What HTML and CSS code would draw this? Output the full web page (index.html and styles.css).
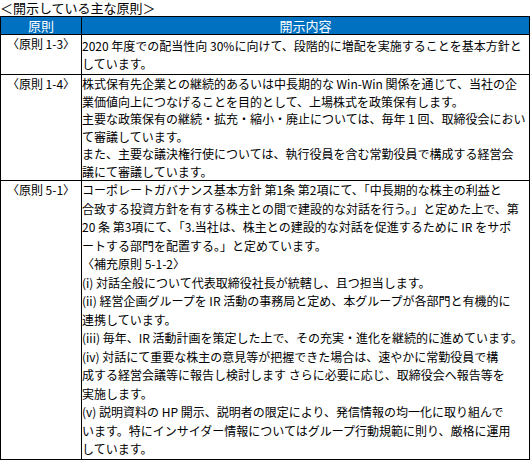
FILE: index.html
```html
<!DOCTYPE html>
<html lang="ja">
<head>
<meta charset="utf-8">
<link rel="stylesheet" href="styles.css">
</head>
<body>
<div class="page">
  <p class="title">＜開示している主な原則＞</p>
  <table class="grid">
    <thead>
      <tr class="head">
        <th class="col-l">原則</th>
        <th class="col-r">開示内容</th>
      </tr>
    </thead>
    <tbody>
      <tr class="row r1">
        <td class="label">〈原則 1-3〉</td>
        <td class="body">2020 年度での配当性向 30%に向けて、段階的に増配を実施することを基本方針と<br>しています。</td>
      </tr>
      <tr class="row r2">
        <td class="label">〈原則 1-4〉</td>
        <td class="body">株式保有先企業との継続的あるいは中長期的な Win-Win 関係を通じて、当社の企<br>業価値向上につなげることを目的として、上場株式を政策保有します。<br>主要な政策保有の継続・拡充・縮小・廃止については、毎年 1 回、取締役会におい<br>て審議しています。<br>また、主要な議決権行使については、執行役員を含む常勤役員で構成する経営会<br>議にて審議しています。</td>
      </tr>
      <tr class="row r3">
        <td class="label">〈原則 5-1〉</td>
        <td class="body">コーポレートガバナンス基本方針 第1条 第2項にて、「中長期的な株主の利益と<br>合致する投資方針を有する株主との間で建設的な対話を行う。」と定めた上で、第<br>20 条 第3項にて、「3.当社は、株主との建設的な対話を促進するために IR をサポ<br>ートする部門を配置する。」と定めています。<br>〈補充原則 5-1-2〉<br>(i) 対話全般について代表取締役社長が統轄し、且つ担当します。<br>(ii) 経営企画グループを IR 活動の事務局と定め、本グループが各部門と有機的に<br>連携しています。<br>(iii) 毎年、IR 活動計画を策定した上で、その充実・進化を継続的に進めています。<br>(iv) 対話にて重要な株主の意見等が把握できた場合は、速やかに常勤役員で構<br>成する経営会議等に報告し検討します さらに必要に応じ、取締役会へ報告等を<br>実施します。<br>(v) 説明資料の HP 開示、説明者の限定により、発信情報の均一化に取り組んで<br>います。特にインサイダー情報についてはグループ行動規範に則り、厳格に運用<br>しています。</td>
      </tr>
    </tbody>
  </table>
</div>
</body>
</html>
```

FILE: styles.css
```css
html, body {
  margin: 0;
  padding: 0;
  background: #ffffff;
}

body {
  font-family: "Noto Sans CJK JP", "Noto Sans", sans-serif;
  font-size: 12px;
  color: #000000;
}

.page {
  width: 530px;
}

.title {
  margin: 0;
  height: 16px;
  line-height: 16px;
  font-size: 13px;
  padding-left: 0;
  overflow: visible;
}

.grid {
  width: 530px;
  border-collapse: collapse;
  table-layout: fixed;
}

.grid th,
.grid td {
  border: 1px solid #000000;
  padding: 0;
}

.col-l {
  width: 80px;
}

.head th {
  background: #0070c0;
  color: #ffffff;
  font-weight: normal;
  font-size: 13px;
  height: 17px;
  line-height: 16px;
  text-align: center;
}

.label {
  text-align: center;
  vertical-align: top;
  line-height: 17.5px;
  padding-top: 1px;
}

.body {
  vertical-align: top;
  line-height: 17.5px;
  padding: 1px 4px 0 4px;
  white-space: nowrap;
}

.r1 .body {
  padding-top: 2px;
  padding-bottom: 2px;
}

.r3 .body {
  line-height: 18.5px;
}
```
